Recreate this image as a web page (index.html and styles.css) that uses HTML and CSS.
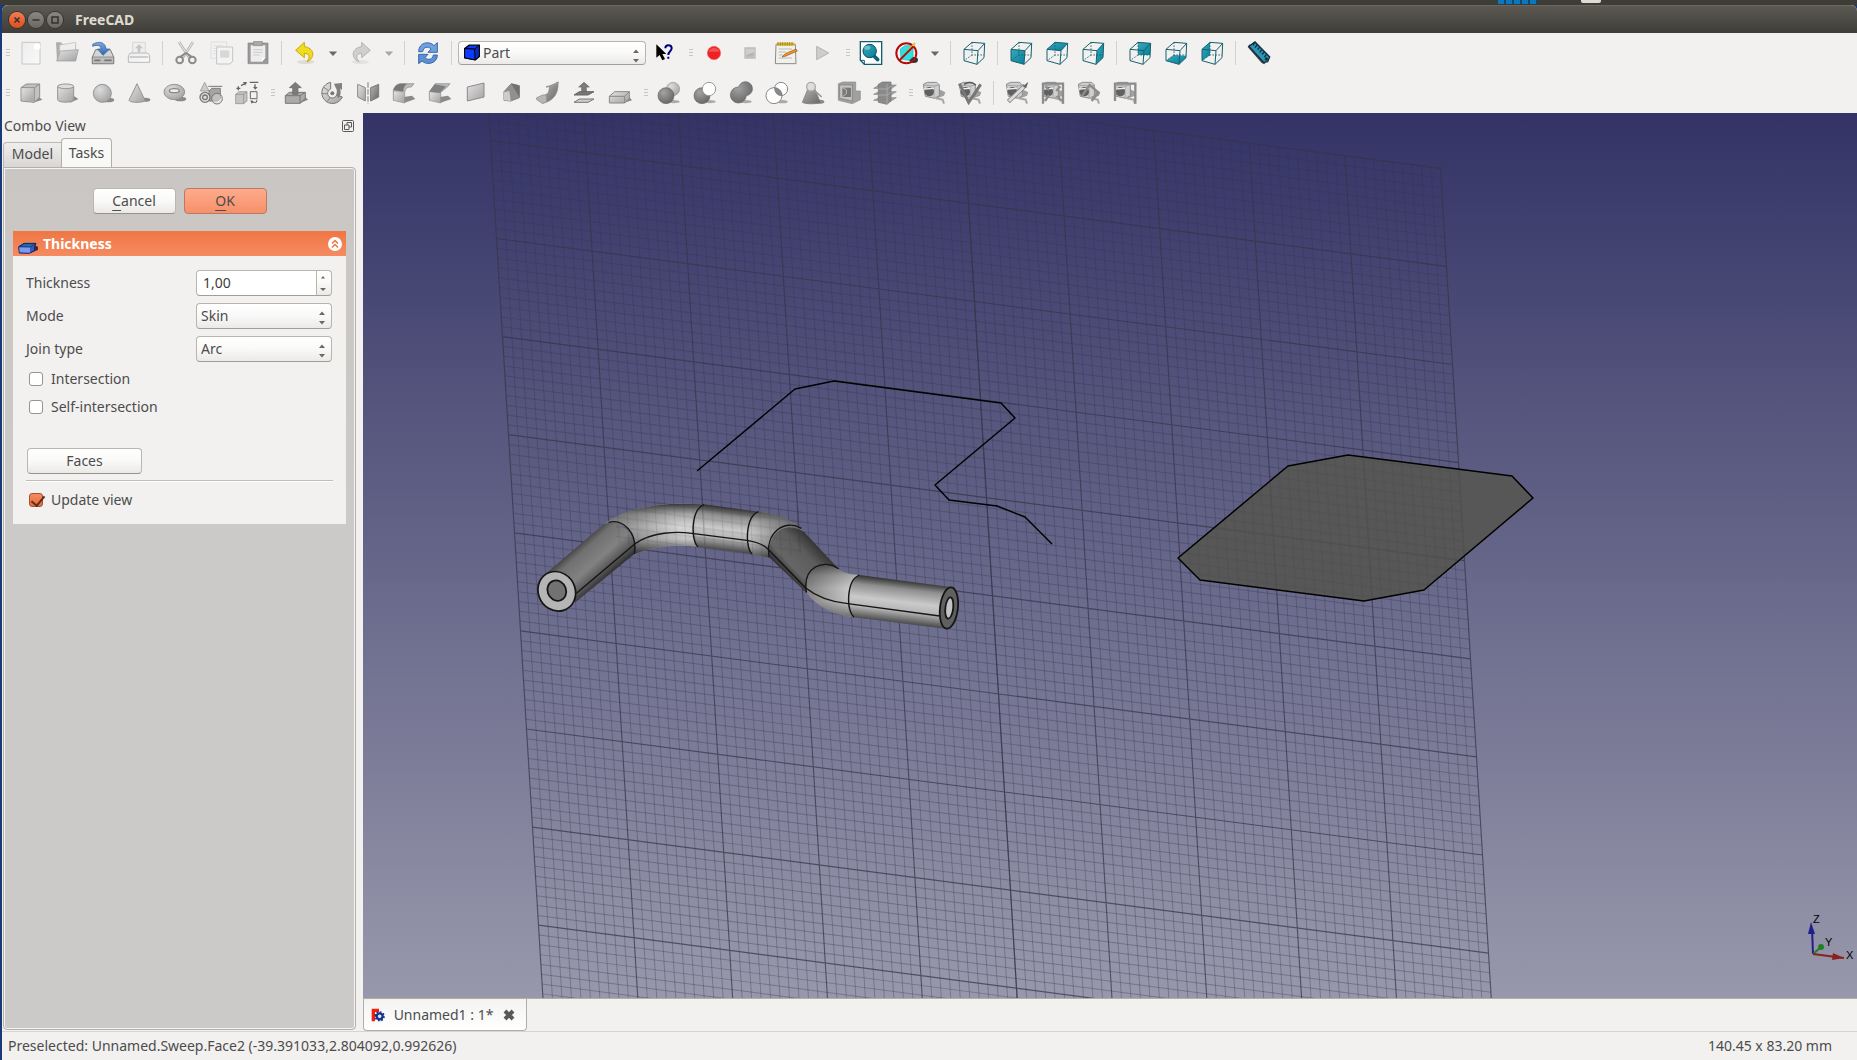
FILE: index.html
```html
<!DOCTYPE html>
<html lang="en">
<head>
<meta charset="utf-8">
<title>FreeCAD</title>
<link rel="stylesheet" href="styles.css">
</head>
<body>
<svg class="defs" aria-hidden="true">
  <defs>
    <linearGradient id="light" x1="0" y1="0" x2="1" y2="1"><stop offset="0" stop-color="#e2e2e2"/><stop offset="1" stop-color="#a2a2a2"/></linearGradient>
    <linearGradient id="dark" x1="0" y1="0" x2="1" y2="1"><stop offset="0" stop-color="#b4b4b4"/><stop offset="1" stop-color="#666"/></linearGradient>
    <linearGradient id="pale" x1="0" y1="0" x2="1" y2="1"><stop offset="0" stop-color="#ececec"/><stop offset="1" stop-color="#fafafa"/></linearGradient>
    <linearGradient id="teal" x1="0" y1="0" x2="1" y2="1"><stop offset="0" stop-color="#3aa9bd"/><stop offset="1" stop-color="#047f96"/></linearGradient>
    <linearGradient id="blue" x1="0" y1="0" x2="0" y2="1"><stop offset="0" stop-color="#7fa8dc"/><stop offset="1" stop-color="#2f67b0"/></linearGradient>
    <radialGradient id="ball" cx=".35" cy=".3" r=".75"><stop offset="0" stop-color="#dcdcdc"/><stop offset="1" stop-color="#a4a4a4"/></radialGradient>
    <radialGradient id="dball" cx=".35" cy=".3" r=".75"><stop offset="0" stop-color="#a2a2a2"/><stop offset="1" stop-color="#666"/></radialGradient>
    <symbol id="cube" viewBox="0 0 72 72"><path d="M6 25L48 29L45 70L6 59ZM6 25L30 4L68 7L48 29M68 7L66 50L45 70" fill="none" stroke="#17606f" stroke-width="3" stroke-linejoin="round"/><path d="M30 4V42H66M30 42L6 59" fill="none" stroke="#17606f" stroke-width="2.5" stroke-dasharray="5 4"/></symbol>
    <symbol id="tape" viewBox="0 0 72 72"><path d="M40 54L66 44L70 34L50 24Z" fill="#a0a0a0"/><path d="M4 10L16 4H44L52 12V44L38 52L10 46Z" fill="#cfcfcf" stroke="#8c8c8c" stroke-width="3"/><path d="M4 12L36 15L52 12M36 15V50" fill="none" stroke="#a4a4a4" stroke-width="3"/><ellipse cx="22" cy="32" rx="14" ry="14" fill="#606060"/><path d="M6 24L36 22" stroke="#eee" stroke-width="4"/><path d="M42 52L62 56L66 68" fill="none" stroke="#a8a8a8" stroke-width="6"/></symbol>
    <symbol id="updown" viewBox="0 0 10 16"><path d="M2 5L5 1.500L8 5ZM2 11L5 14.500L8 11Z" fill="#6b6862"/></symbol>
    <symbol id="drop" viewBox="0 0 12 8"><path d="M1 1.500H11L6 7Z" fill="currentColor"/></symbol>
  </defs>
</svg>
<div class="desktop-bar"><i class="tray-blue"></i><i class="tray-white"></i></div>
<div class="window">
  <header class="titlebar">
    <button class="wm wm-close" aria-label="Close"><svg viewBox="0 0 16 16"><path d="M5.500 5.500L10.500 10.500M10.500 5.500L5.500 10.500"/></svg></button>
    <button class="wm" aria-label="Minimize"><svg viewBox="0 0 16 16"><path d="M4.500 8H11.500"/></svg></button>
    <button class="wm" aria-label="Maximize"><svg viewBox="0 0 16 16"><path d="M5 5H11V11H5Z"/></svg></button>
    <h1>FreeCAD</h1>
  </header>

  <div class="toolbar">
    <i class="grip"></i>
    <button aria-label="New"><svg viewBox="0 0 72 72"><path d="M9 4H63V69H9Z" fill="url(#pale)" stroke="#c6c6c6" stroke-width="3"/><circle cx="54" cy="17" r="10" fill="#fff"/></svg></button>
    <button aria-label="Open"><svg viewBox="0 0 72 72"><path d="M3 4H18L22 9H63V60H6Z" fill="#aeaeae"/><path d="M14 12L62 4V40H14Z" fill="#eee" stroke="#bbb" stroke-width="2"/><path d="M16 30L70 26L62 60H5Z" fill="url(#light)" stroke="#999" stroke-width="2"/></svg></button>
    <button aria-label="Save"><svg viewBox="0 0 72 72"><path d="M14 26H58L68 48V68H4V48Z" fill="#d4d4d4" stroke="#7c7c7c" stroke-width="3"/><path d="M4 48H68V68H4Z" fill="#bcbcbc" stroke="#777" stroke-width="2"/><path d="M10 58H28M40 58H62" stroke="#777" stroke-width="5"/><path d="M5 10C24-2 44 4 45 24H56L36 43L20 24H30C30 14 20 10 5 16Z" fill="url(#blue)" stroke="#2d5c9c" stroke-width="2"/></svg></button>
    <button aria-label="Print"><svg viewBox="0 0 72 72"><path d="M17 4H55V40H17Z" fill="#eee" stroke="#ccc" stroke-width="2"/><path d="M36 10L48 22H40V34H32V22H24Z" fill="#c4c4c4"/><path d="M10 36H62L68 44V64H4V44Z" fill="url(#pale)" stroke="#b8b8b8" stroke-width="3"/><path d="M8 48H64" stroke="#bbb" stroke-width="4"/></svg></button>
    <i class="sep"></i>
    <button aria-label="Cut"><svg viewBox="0 0 72 72"><path d="M15 3L46 50M57 3L26 50" stroke="#b4b4b4" stroke-width="8"/><path d="M15 3L44 47M57 3L28 47" stroke="#ededed" stroke-width="3"/><ellipse cx="17" cy="57" rx="10" ry="10" fill="none" stroke="#8b8b8b" stroke-width="6"/><ellipse cx="55" cy="57" rx="10" ry="10" fill="none" stroke="#8b8b8b" stroke-width="6"/><path d="M20 47L36 36L52 47" fill="none" stroke="#8b8b8b" stroke-width="6"/></svg></button>
    <button aria-label="Copy"><svg viewBox="0 0 72 72"><path d="M3 3H50V52H3Z" fill="#f2f2f2" stroke="#d4d4d4" stroke-width="2"/><path d="M10 14H40M10 22H40M10 30H20M10 38H20" stroke="#ddd" stroke-width="3"/><path d="M20 18H68V60L60 69H20Z" fill="#f4f4f4" stroke="#c4c4c4" stroke-width="3"/><path d="M30 28H58V50H30Z" fill="#d8d8d8"/></svg></button>
    <button aria-label="Paste"><svg viewBox="0 0 72 72"><path d="M6 6H66V68H6Z" fill="#999" stroke="#868686" stroke-width="2"/><path d="M14 13H58V50L48 62H14Z" fill="#ededed"/><path d="M23 1H49V14H23Z" fill="#aaa" stroke="#888" stroke-width="2"/><path d="M22 26H50M22 34H50M22 42H42" stroke="#ccc" stroke-width="3"/><path d="M58 50L48 62V50Z" fill="#fff"/></svg></button>
    <i class="sep"></i>
    <button aria-label="Undo"><svg viewBox="0 0 72 72"><ellipse cx="38" cy="63" rx="26" ry="6" fill="#dedcd8"/><path d="M8 28L34 4V17C62 20 70 48 42 63C54 46 48 38 34 37V50Z" fill="#f2dc20" stroke="#c9a808" stroke-width="3" stroke-linejoin="round"/></svg></button>
    <button class="menu" aria-label="Undo list"><svg viewBox="0 0 12 8"><use href="#drop"/></svg></button>
    <button aria-label="Redo"><svg viewBox="0 0 72 72"><ellipse cx="34" cy="63" rx="26" ry="6" fill="#e4e2e0"/><path d="M64 28L38 4V17C10 20 2 48 30 63C18 46 24 38 38 37V50Z" fill="#cfcfcf" stroke="#b4b4b4" stroke-width="3" stroke-linejoin="round"/></svg></button>
    <button class="menu menu-off" aria-label="Redo list"><svg viewBox="0 0 12 8"><use href="#drop"/></svg></button>
    <i class="sep"></i>
    <button aria-label="Refresh"><svg viewBox="0 0 72 72"><path d="M8 32C8 4 40-2 54 14L64 5V34H36L45 24C36 14 22 18 20 32Z" fill="#6ea1dd" stroke="#3969ae" stroke-width="3"/><path d="M64 42C64 68 32 74 18 60L8 68V40H36L27 50C38 60 50 54 52 42Z" fill="#5c90d2" stroke="#3969ae" stroke-width="3"/></svg></button>
    <i class="sep"></i>
    <div class="combo workbench">
      <svg class="wb-icon" viewBox="0 0 48 48"><path d="M2 12L16 2H46V36L34 46L2 40Z" fill="#0b3bff" stroke="#000" stroke-width="4" stroke-linejoin="round"/><path d="M2 12L32 14L46 2V36L34 46Z" fill="#0a2bb8" stroke="#000" stroke-width="3"/><path d="M2 12L32 14L33 46L2 40Z" fill="#0b3bff" stroke="#000" stroke-width="3"/></svg>
      <select aria-label="Workbench"><option>Part</option></select>
      <svg class="arrows" viewBox="0 0 10 16"><use href="#updown"/></svg>
    </div>
    <button aria-label="What's this?"><svg viewBox="0 0 72 72"><path d="M10 10V50L20 42L28 58L36 54L28 39H40Z" fill="#000"/><path d="M37 22C37 10 56 10 56 22C56 31 46 31 46 42M46 47V53" fill="none" stroke="#000080" stroke-width="6"/></svg></button>
    <i class="grip"></i>
    <button aria-label="Record macro"><svg viewBox="0 0 72 72"><circle cx="36" cy="36" r="20" fill="#ee2222" stroke="#f46a6a" stroke-width="2"/><path d="M20 32A17 17 0 0 1 52 32Z" fill="#f45252"/></svg></button>
    <button aria-label="Stop macro"><svg viewBox="0 0 72 72"><path d="M21 21H51V51H21Z" fill="#cecece" stroke="#bcbcbc" stroke-width="4"/><path d="M25 42L47 34V47H25Z" fill="#b4b4b4"/></svg></button>
    <button aria-label="Macros"><svg viewBox="0 0 72 72"><path d="M6 10H64L66 68H4Z" fill="#f0f0ec" stroke="#8c8c86" stroke-width="3"/><path d="M9 5H61V14H9Z" fill="#d8b520"/><path d="M12 3V14M19 3V14M26 3V14M33 3V14M40 3V14M47 3V14M54 3V14" stroke="#8b7415" stroke-width="2"/><path d="M14 24H54M14 33H36M14 42H28M14 51H54" stroke="#bbb" stroke-width="3"/><path d="M24 48L34 38L66 24L70 30L36 45Z" fill="#f0952a" stroke="#955510" stroke-width="2"/></svg></button>
    <button aria-label="Execute macro"><svg viewBox="0 0 72 72"><path d="M20 16L56 36L20 56Z" fill="#cdcdcd" stroke="#b2b2b2" stroke-width="3"/></svg></button>
    <i class="grip"></i>
    <button aria-label="Fit all"><svg viewBox="0 0 72 72"><path d="M4 2H68V70H16L4 58Z" fill="#fff" stroke="#135e6d" stroke-width="4"/><path d="M4 58H16V70" fill="none" stroke="#135e6d" stroke-width="3"/><path d="M42 42L56 56" stroke="#0b6579" stroke-width="11" stroke-linecap="round"/><circle cx="32" cy="30" r="20" fill="url(#teal)" stroke="#0a4652" stroke-width="3"/><ellipse cx="25" cy="20" rx="9" ry="6" fill="#6cc4d2"/></svg></button>
    <button aria-label="Draw style"><svg viewBox="0 0 72 72"><ellipse cx="56" cy="57" rx="13" ry="9" fill="#333"/><path d="M16 24L30 14H54V48L42 58L18 54Z" fill="#33dede" stroke="#1bb" stroke-width="2"/><circle cx="34" cy="37" r="30" fill="none" stroke="#b40a0a" stroke-width="6"/><path d="M40 30L60 6" stroke="#e9c726" stroke-width="6"/><path d="M13 58L55 16" stroke="#b40a0a" stroke-width="6"/></svg></button>
    <button class="menu" aria-label="Draw style list"><svg viewBox="0 0 12 8"><use href="#drop"/></svg></button>
    <i class="sep"></i>
    <button aria-label="Axonometric"><svg viewBox="0 0 72 72"><use href="#cube"/></svg></button>
    <i class="sep"></i>
    <button aria-label="Front"><svg viewBox="0 0 72 72"><path d="M6 25L48 29L45 70L6 59Z" fill="url(#teal)"/><use href="#cube"/></svg></button>
    <button aria-label="Top"><svg viewBox="0 0 72 72"><path d="M6 25L30 4L68 7L48 29Z" fill="url(#teal)"/><use href="#cube"/></svg></button>
    <button aria-label="Right"><svg viewBox="0 0 72 72"><path d="M48 29L68 7L66 50L45 70Z" fill="url(#teal)"/><use href="#cube"/></svg></button>
    <i class="sep"></i>
    <button aria-label="Rear"><svg viewBox="0 0 72 72"><path d="M30 4L68 7L66 42H30Z" fill="url(#teal)"/><use href="#cube"/></svg></button>
    <button aria-label="Bottom"><svg viewBox="0 0 72 72"><path d="M6 59L30 42L66 44V50L45 70Z" fill="url(#teal)"/><use href="#cube"/></svg></button>
    <button aria-label="Left"><svg viewBox="0 0 72 72"><path d="M6 25L30 4V42L6 59Z" fill="url(#teal)"/><use href="#cube"/></svg></button>
    <i class="sep"></i>
    <button aria-label="Measure distance"><svg viewBox="0 0 72 72"><path d="M2 18L8 10L60 58L52 70L44 66Z" fill="#444"/><path d="M6 16L24 3L68 48L62 62L50 64Z" fill="#2f93b4" stroke="#0e2f3c" stroke-width="4"/><path d="M22 5L18 13M30 12L24 20M37 19L32 26M44 26L38 34M51 34L45 40M58 41L52 48" stroke="#0e2f3c" stroke-width="4"/><circle cx="58" cy="54" r="5" fill="#0c3947"/></svg></button>
  </div>

  <div class="toolbar">
    <i class="grip"></i>
    <button aria-label="Box"><svg viewBox="0 0 72 72"><path d="M40 66L70 56L60 48Z" fill="#8a8a8a"/><path d="M6 20L22 9H62V48L46 64L6 60Z" fill="#c2c2c2" stroke="#8e8e8e" stroke-width="3"/><path d="M6 20H46V62M46 20L62 9" fill="none" stroke="#8e8e8e" stroke-width="3"/><path d="M8 22H44V61L8 58Z" fill="url(#light)"/></svg></button>
    <button aria-label="Cylinder"><svg viewBox="0 0 72 72"><path d="M44 66L70 54L58 46Z" fill="#8a8a8a"/><path d="M8 16V56C8 66 56 66 56 56V16Z" fill="url(#light)" stroke="#959595" stroke-width="3"/><ellipse cx="32" cy="16" rx="24" ry="7" fill="#ddd" stroke="#959595" stroke-width="3"/></svg></button>
    <button aria-label="Sphere"><svg viewBox="0 0 72 72"><ellipse cx="50" cy="57" rx="20" ry="7" fill="#8a8a8a"/><circle cx="34" cy="37" r="27" fill="url(#ball)" stroke="#969696" stroke-width="3"/></svg></button>
    <button aria-label="Cone"><svg viewBox="0 0 72 72"><ellipse cx="54" cy="56" rx="16" ry="6" fill="#8a8a8a"/><path d="M30 8L6 58C8 66 52 66 54 58Z" fill="url(#light)" stroke="#959595" stroke-width="3"/></svg></button>
    <button aria-label="Torus"><svg viewBox="0 0 72 72"><ellipse cx="52" cy="54" rx="18" ry="7" fill="#8a8a8a"/><ellipse cx="34" cy="33" rx="31" ry="23" fill="url(#ball)" stroke="#959595" stroke-width="3"/><ellipse cx="34" cy="29" rx="15" ry="6" fill="#eee" stroke="#888" stroke-width="4"/></svg></button>
    <button aria-label="Primitives"><svg viewBox="0 0 72 72"><path d="M17 4L4 30H30Z" fill="#ccc" stroke="#888" stroke-width="2"/><path d="M28 16H70" stroke="#777" stroke-width="3"/><path d="M30 30L38 22H64V52L56 60H30Z" fill="#a4a4a4" stroke="#808080" stroke-width="3"/><circle cx="18" cy="49" r="15" fill="#ddd" stroke="#777" stroke-width="4"/><circle cx="18" cy="49" r="7" fill="none" stroke="#777" stroke-width="4"/><circle cx="54" cy="53" r="16" fill="#ddd" fill-opacity=".5" stroke="#777" stroke-width="3"/></svg></button>
    <button aria-label="Shape builder"><svg viewBox="0 0 72 72"><path d="M2 40L12 32H36V60L26 68H2Z" fill="#c4c4c4" stroke="#888" stroke-width="2"/><path d="M2 40H26V68M26 40L36 32" fill="none" stroke="#888" stroke-width="2"/><path d="M4 22H16M10 16V28M18 14L34 6M44 4H70M60 10V20" stroke="#666" stroke-width="4"/><path d="M54 18H68L61 26ZM24 3L36 3L30 14ZM46 58L56 60L50 68Z" fill="#666"/><path d="M46 32H66V53H46Z" fill="none" stroke="#666" stroke-width="3"/><path d="M50 64H64L66 56" fill="none" stroke="#666" stroke-width="3"/></svg></button>
    <i class="grip"></i>
    <button aria-label="Extrude"><svg viewBox="0 0 72 72"><path d="M44 68L72 56L62 46Z" fill="#888"/><path d="M4 44L16 34H64V52L48 67H4Z" fill="#aaa" stroke="#777" stroke-width="3"/><path d="M4 44H48V67M48 44L64 34" fill="none" stroke="#777" stroke-width="3"/><path d="M34 4L52 20H42V40H26V20H16Z" fill="#7c7c7c" stroke="#666" stroke-width="2"/></svg></button>
    <button aria-label="Revolve"><svg viewBox="0 0 72 72"><path d="M32 4V24A14 14 0 1 0 50 42L67 48A32 32 0 1 1 32 4Z" fill="url(#light)" stroke="#777" stroke-width="3"/><path d="M4 38H22M22 62L30 50M10 18L24 28" stroke="#888" stroke-width="3"/><path d="M42 8L66 6V28L60 22C64 34 62 44 56 52L48 42C52 34 52 26 46 18Z" fill="#808080"/><circle cx="37" cy="37" r="6" fill="#777"/></svg></button>
    <button aria-label="Mirror"><svg viewBox="0 0 72 72"><path d="M5 10L28 20V60L5 48Z" fill="url(#light)" stroke="#8a8a8a" stroke-width="3"/><path d="M68 10L44 20V60L68 48Z" fill="url(#dark)" stroke="#777" stroke-width="3"/><path d="M36 4V68" stroke="#999" stroke-width="4" stroke-dasharray="16 5"/></svg></button>
    <button aria-label="Fillet"><svg viewBox="0 0 72 72"><path d="M36 66L70 54L60 44L36 48Z" fill="#8a8a8a"/><path d="M4 28C8 14 16 8 28 8H66L58 18C46 18 40 22 38 34V66L4 58Z" fill="#bbb" stroke="#888" stroke-width="2"/><path d="M4 28C8 14 16 8 28 8H46C38 12 34 20 34 32Z" fill="#777"/><path d="M6 32L36 36V64L6 57Z" fill="url(#light)"/></svg></button>
    <button aria-label="Chamfer"><svg viewBox="0 0 72 72"><path d="M36 66L70 54L60 44L36 48Z" fill="#8a8a8a"/><path d="M4 32L22 8H66L58 18L38 34V66L4 58Z" fill="#bbb" stroke="#888" stroke-width="2"/><path d="M4 32L20 10L54 16L36 36Z" fill="#808080"/><path d="M6 34L36 38V64L6 57Z" fill="url(#light)"/></svg></button>
    <button aria-label="Make face"><svg viewBox="0 0 72 72"><path d="M10 18L60 6V48L10 60Z" fill="url(#light)" stroke="#8a8a8a" stroke-width="3"/></svg></button>
    <button aria-label="Ruled surface"><svg viewBox="0 0 72 72"><path d="M12 32L34 8L58 14V50L32 60L12 58Z" fill="#909090" stroke="#808080" stroke-width="3"/><path d="M34 8L58 14V48Z" fill="#707070"/><path d="M12 34L28 30L32 60L12 58Z" fill="#ccc"/></svg></button>
    <button aria-label="Loft"><svg viewBox="0 0 72 72"><path d="M66 3V16C64 46 44 64 18 66L20 44C36 42 40 32 40 16Z" fill="url(#dark)" stroke="#888" stroke-width="2"/><path d="M2 50L20 42H32V62L20 68L2 56Z" fill="#b6b6b6" stroke="#888" stroke-width="2"/><path d="M30 18L60 10L68 3" fill="none" stroke="#999" stroke-width="4"/></svg></button>
    <button aria-label="Sweep"><svg viewBox="0 0 72 72"><path d="M36 4L52 18H43V32H29V18H20Z" fill="#7c7c7c" stroke="#666" stroke-width="2"/><path d="M6 42L22 32H66L48 42Z" fill="#777" stroke="#666" stroke-width="3"/><path d="M6 64L22 54H66L48 64Z" fill="#ccc" stroke="#777" stroke-width="3"/></svg></button>
    <button aria-label="Offset"><svg viewBox="0 0 72 72"><path d="M46 66L72 58L62 46Z" fill="#888"/><path d="M4 46L20 32H64V52L50 66H4Z" fill="url(#light)" stroke="#888" stroke-width="3"/><path d="M4 46H50L64 32M50 46V66" fill="none" stroke="#888" stroke-width="3"/></svg></button>
    <i class="grip"></i>
    <button aria-label="Boolean"><svg viewBox="0 0 72 72"><ellipse cx="50" cy="62" rx="18" ry="5" fill="#aaa"/><circle cx="48" cy="24" r="20" fill="url(#ball)" stroke="#999" stroke-width="2"/><circle cx="27" cy="44" r="24" fill="url(#dball)" stroke="#666" stroke-width="2"/></svg></button>
    <button aria-label="Cut shapes"><svg viewBox="0 0 72 72"><ellipse cx="50" cy="62" rx="18" ry="5" fill="#aaa"/><circle cx="27" cy="44" r="24" fill="url(#dball)" stroke="#666" stroke-width="2"/><circle cx="48" cy="24" r="20" fill="#fff" stroke="#999" stroke-width="3"/></svg></button>
    <button aria-label="Union"><svg viewBox="0 0 72 72"><ellipse cx="50" cy="62" rx="18" ry="5" fill="#aaa"/><path d="M29 18A21 21 0 1 1 52 44A24 24 0 1 1 29 18Z" fill="url(#dball)" stroke="#666" stroke-width="2"/></svg></button>
    <button aria-label="Intersection of shapes"><svg viewBox="0 0 72 72"><ellipse cx="52" cy="62" rx="16" ry="5" fill="#aaa"/><circle cx="48" cy="24" r="20" fill="#fff" stroke="#888" stroke-width="3"/><circle cx="27" cy="44" r="24" fill="#fff" stroke="#888" stroke-width="3"/><path d="M29 20A24 24 0 0 1 51 44A21 21 0 0 1 29 20Z" fill="#8a8a8a" stroke="#777" stroke-width="2"/></svg></button>
    <button aria-label="Check geometry"><svg viewBox="0 0 72 72"><ellipse cx="56" cy="62" rx="14" ry="6" fill="#8a8a8a"/><path d="M22 20H40L58 64C48 70 12 70 4 64Z" fill="url(#dark)" stroke="#777" stroke-width="2"/><circle cx="30" cy="17" r="13" fill="#ddd" stroke="#aaa" stroke-width="4"/><path d="M40 28L62 48" stroke="#999" stroke-width="5"/></svg></button>
    <button aria-label="Section"><svg viewBox="0 0 72 72"><path d="M4 8L18 3H56V30H70V56L46 68L4 58Z" fill="#a0a0a0" stroke="#8b8b8b" stroke-width="2"/><path d="M8 12H46V60L8 52Z" fill="#c4c4c4" stroke="#777" stroke-width="2"/><path d="M16 20H42V48H16Z" fill="#777"/><path d="M16 20L28 26V38L16 48" fill="none" stroke="#bbb" stroke-width="3"/></svg></button>
    <button aria-label="Cross-sections"><svg viewBox="0 0 72 72"><path d="M2 22L18 12H70L54 24ZM2 40L18 32H70L54 42ZM2 58L18 50H70L54 60Z" fill="#a4a4a4" stroke="#858585" stroke-width="2"/><path d="M16 10L28 3H54V60L42 70L16 64Z" fill="#8a8a8a" stroke="#707070" stroke-width="2"/><path d="M16 24H42L54 16M16 42H42L54 34M42 10V68" fill="none" stroke="#aaa" stroke-width="3"/></svg></button>
    <i class="grip"></i>
    <button aria-label="Measure linear"><svg viewBox="0 0 72 72"><use href="#tape"/></svg></button>
    <button aria-label="Measure angular"><svg viewBox="0 0 72 72"><use href="#tape"/><path d="M4 8L32 64L68 10" fill="none" stroke="#777" stroke-width="9"/><path d="M18 10C30 2 44 4 54 12" fill="none" stroke="#555" stroke-width="4"/></svg></button>
    <i class="sep"></i>
    <button aria-label="Refresh measurements"><svg viewBox="0 0 72 72"><use href="#tape"/><path d="M10 62L60 14" stroke="#888" stroke-width="13"/><path d="M12 60L56 18" stroke="#ddd" stroke-width="8"/><path d="M54 16L70 2L64 20Z" fill="#666"/></svg></button>
    <button aria-label="Toggle all measurements"><svg viewBox="0 0 72 72"><use href="#tape"/><path d="M6 68V8H66V68M14 16L24 28M58 16L46 30M12 60L24 42M60 60L50 44" fill="none" stroke="#8c8c8c" stroke-width="7"/></svg></button>
    <button aria-label="Toggle 3D measurements"><svg viewBox="0 0 72 72"><use href="#tape"/><path d="M14 46L38 12L64 34L44 60" fill="none" stroke="#8c8c8c" stroke-width="7"/></svg></button>
    <button aria-label="Toggle delta measurements"><svg viewBox="0 0 72 72"><use href="#tape"/><path d="M6 60V8H67V68" fill="none" stroke="#8c8c8c" stroke-width="7"/></svg></button>
  </div>

  <div class="workspace">
    <aside class="dock">
      <div class="dock-title"><h2>Combo View</h2><button aria-label="Float"><svg viewBox="0 0 12 12"><path d="M.500 1.500Q.500.500 1.500.500H10.500Q11.500.500 11.500 1.500V10.500Q11.500 11.500 10.500 11.500H1.500Q.500 11.500.500 10.500ZM5 5V2.500H9.500V7H7M2.500 5H7V9.500H2.500Z"/></svg></button></div>
      <nav class="tabs"><button class="tab">Model</button><button class="tab tab-on">Tasks</button></nav>
      <form class="tasks">
        <div class="actions"><button type="button" class="btn"><u>C</u>ancel</button><button type="button" class="btn btn-ok"><u>O</u>K</button></div>
        <section class="card">
          <header class="card-head">
            <svg class="head-icon" viewBox="0 0 60 36"><path d="M34 34L60 24V14L46 8Z" fill="#4a2a30"/><path d="M2 14L18 4H54L50 14V26L34 34L4 33Z" fill="#3a58c0" stroke="#12235c" stroke-width="3"/><path d="M4 16H36V32L5 31Z" fill="#7c9af0"/><path d="M4 14L18 5H53L38 15Z" fill="#1e6fb0" stroke="#12235c" stroke-width="2"/></svg>
            <h3>Thickness</h3>
            <button type="button" aria-label="Collapse"><svg viewBox="0 0 14 14"><circle cx="7" cy="7" r="7" fill="#fff"/><path d="M4 6.500L7 3.500L10 6.500M4 10.500L7 7.500L10 10.500" fill="none" stroke="#ee7444" stroke-width="1.500"/></svg></button>
          </header>
          <div class="card-body">
            <div class="field"><label for="thick">Thickness</label><div class="combo spin"><input id="thick" type="text" value="1,00"><svg class="arrows" viewBox="0 0 10 16"><path d="M3 3.500L5 1L7 3.500ZM2 13L5 16L8 13Z" fill="#6b6862"/></svg></div></div>
            <div class="field"><label for="mode">Mode</label><div class="combo"><select id="mode"><option>Skin</option></select><svg class="arrows" viewBox="0 0 10 16"><use href="#updown"/></svg></div></div>
            <div class="field"><label for="join">Join type</label><div class="combo"><select id="join"><option>Arc</option></select><svg class="arrows" viewBox="0 0 10 16"><use href="#updown"/></svg></div></div>
            <label class="check"><input type="checkbox">Intersection</label>
            <label class="check"><input type="checkbox">Self-intersection</label>
            <button type="button" class="btn faces">Faces</button>
            <hr>
            <label class="check"><input type="checkbox" checked>Update view</label>
          </div>
        </section>
      </form>
    </aside>

    <main class="document">
      <div class="view">
        <svg viewBox="363 113 1494 885" preserveAspectRatio="xMidYMid slice" role="img" aria-label="3D view">
          <defs>
            <linearGradient id="sky" x1="0" y1="0" x2="0" y2="1"><stop offset="0" stop-color="#333366"/><stop offset="1" stop-color="#9898ac"/></linearGradient>
            <path id="rows" d="M0 10H1000M0 20H1000M0 30H1000M0 40H1000M0 50H1000M0 60H1000M0 70H1000M0 80H1000M0 90H1000"/>
            <path id="cols" d="M10 0V1000M20 0V1000M30 0V1000M40 0V1000M50 0V1000M60 0V1000M70 0V1000M80 0V1000M90 0V1000"/>
            <g id="grid" transform="matrix(.956 .126 .06 .981 484.500 42.300)" fill="none" stroke="#343448">
              <g stroke-width="1" stroke-opacity=".34">
                <use href="#rows"/><use href="#rows" y="100"/><use href="#rows" y="200"/><use href="#rows" y="300"/><use href="#rows" y="400"/><use href="#rows" y="500"/><use href="#rows" y="600"/><use href="#rows" y="700"/><use href="#rows" y="800"/><use href="#rows" y="900"/>
                <use href="#cols"/><use href="#cols" x="100"/><use href="#cols" x="200"/><use href="#cols" x="300"/><use href="#cols" x="400"/><use href="#cols" x="500"/><use href="#cols" x="600"/><use href="#cols" x="700"/><use href="#cols" x="800"/><use href="#cols" x="900"/>
              </g>
              <path stroke-width="1.200" stroke-opacity=".72" d="M0 0H1000M0 100H1000M0 200H1000M0 300H1000M0 400H1000M0 500H1000M0 600H1000M0 700H1000M0 800H1000M0 900H1000M0 0V1000M100 0V1000M200 0V1000M300 0V1000M400 0V1000M500 0V1000M600 0V1000M700 0V1000M800 0V1000M900 0V1000M1000 0V1000"/>
              <path stroke-width="1.200" stroke-opacity=".5" d="M500 0V1000"/>
            </g>
            <linearGradient id="segA" gradientUnits="userSpaceOnUse" x1="145" y1="565" x2="240" y2="665"><stop offset="0" stop-color="#3c3c3c"/><stop offset=".2" stop-color="#707070"/><stop offset=".55" stop-color="#828282"/><stop offset=".8" stop-color="#565656"/><stop offset="1" stop-color="#222"/></linearGradient>
            <linearGradient id="segB" gradientUnits="userSpaceOnUse" x1="250" y1="560" x2="440" y2="490"><stop offset="0" stop-color="#767676"/><stop offset="1" stop-color="#d6d6d6"/></linearGradient>
            <linearGradient id="segD" gradientUnits="userSpaceOnUse" x1="650" y1="500" x2="760" y2="540"><stop offset="0" stop-color="#c6c6c6"/><stop offset="1" stop-color="#747474"/></linearGradient>
            <linearGradient id="segE" gradientUnits="userSpaceOnUse" x1="745" y1="650" x2="845" y2="560"><stop offset="0" stop-color="#262626"/><stop offset=".25" stop-color="#666"/><stop offset=".65" stop-color="#5c5c5c"/><stop offset="1" stop-color="#2d2d2d"/></linearGradient>
            <linearGradient id="segF" gradientUnits="userSpaceOnUse" x1="790" y1="650" x2="930" y2="690"><stop offset="0" stop-color="#777"/><stop offset="1" stop-color="#cecece"/></linearGradient>
            <linearGradient id="edge" x1="0" y1="0" x2="0" y2="1"><stop offset="0" stop-color="#111" stop-opacity=".8"/><stop offset=".22" stop-color="#222" stop-opacity=".25"/><stop offset=".45" stop-color="#222" stop-opacity="0"/><stop offset=".7" stop-color="#222" stop-opacity=".1"/><stop offset="1" stop-color="#111" stop-opacity=".75"/></linearGradient>
            <linearGradient id="segG" gradientUnits="userSpaceOnUse" x1="1080" y1="662" x2="1064" y2="790"><stop offset="0" stop-color="#333"/><stop offset=".2" stop-color="#8f8f8f"/><stop offset=".5" stop-color="#cacaca"/><stop offset=".72" stop-color="#b4b4b4"/><stop offset="1" stop-color="#484848"/></linearGradient>
            <linearGradient id="segC" gradientUnits="userSpaceOnUse" x1="592" y1="444" x2="576" y2="572"><stop offset="0" stop-color="#333"/><stop offset=".2" stop-color="#8f8f8f"/><stop offset=".5" stop-color="#cacaca"/><stop offset=".72" stop-color="#b4b4b4"/><stop offset="1" stop-color="#484848"/></linearGradient>
            <clipPath id="over"><path d="M616 505L640 502L802 507V552L780 560L722 545L616 545Z"/></clipPath>
            <clipPath id="plate"><path d="M1178 558L1288 466L1348 455L1512 476L1533 498L1424 590L1364 601L1200 580Z"/></clipPath>
          </defs>
          <rect x="-1000" y="113" width="4000" height="885" fill="url(#sky)"/>
          <use href="#grid"/>
          <g stroke="#000" stroke-width="1.500" stroke-linejoin="round">
            <path d="M697 471L795 389L834 381L1001 403L1015 418L935 485L949 500L997 506L1025 517L1052 544" fill="none"/>
            <path d="M1178 558L1288 466L1348 455L1512 476L1533 498L1424 590L1364 601L1200 580Z" fill="#575757"/>
          </g>
          <g clip-path="url(#plate)" opacity=".35"><use href="#grid"/></g>
          <g transform="translate(520 360) scale(.357143 .333333)">
            <path d="M75 638L235 492C280 475 330 520 320 582L155 727Z" fill="url(#segA)"/>
            <path d="M235 492C300 440 400 425 515 433C478 450 478 540 498 560C430 552 370 560 318 583C330 520 290 475 235 492Z" fill="url(#segB)"/>
            <path d="M235 492C300 440 400 425 515 433C478 450 478 540 498 560C430 552 370 560 318 583C330 520 290 475 235 492Z" fill="url(#edge)"/>
            <path d="M515 433L668 455C630 470 630 565 650 582L498 560C478 540 478 450 515 433Z" fill="url(#segC)"/>
            <path d="M668 455C720 460 770 480 795 515C740 480 690 520 700 594L650 582C630 565 630 470 668 455Z" fill="url(#segD)"/>
            <path d="M668 455C720 460 770 480 795 515C740 480 690 520 700 594L650 582C630 565 630 470 668 455Z" fill="url(#edge)" opacity=".8"/>
            <path d="M795 515L895 630C850 590 795 620 802 698L700 594C690 520 740 480 795 515Z" fill="url(#segE)"/>
            <path d="M895 630C910 640 925 643 950 645C915 660 912 745 935 772C880 765 830 740 802 698C790 620 850 590 895 630Z" fill="url(#segF)"/>
            <path d="M895 630C910 640 925 643 950 645C915 660 912 745 935 772C880 765 830 740 802 698C790 620 850 590 895 630Z" fill="url(#edge)" opacity=".7"/>
            <path d="M950 645L1210 682L1195 806L935 772C912 745 915 660 950 645Z" fill="url(#segG)"/>
            <g fill="none" stroke="#151515" stroke-width="4">
              <path d="M248 487C290 475 330 520 320 582M515 433C478 450 478 540 498 560M668 455C630 470 630 565 650 582M788 505C740 475 685 520 698 592M892 626C850 595 790 620 802 698M950 645C915 660 912 745 935 772"/>
              <path d="M158 700L322 551C370 515 440 514 481 520L635 541C660 545 680 552 694 567L800 684C840 718 880 727 918 731L1175 768"/>
            </g>
            <ellipse cx="103" cy="694" rx="52" ry="60" transform="rotate(-18 103 694)" fill="#b5b5b5" stroke="#151515" stroke-width="5"/>
            <ellipse cx="103" cy="692" rx="26" ry="31" transform="rotate(-18 103 692)" fill="#727272" stroke="#151515" stroke-width="5"/>
            <ellipse cx="1201" cy="744" rx="25" ry="62" transform="rotate(6 1201 744)" fill="#606060" stroke="#151515" stroke-width="5"/>
            <ellipse cx="1202" cy="744" rx="11" ry="32" transform="rotate(6 1202 744)" fill="#c4c4c4" stroke="#151515" stroke-width="5"/>
          </g>
          <g clip-path="url(#over)" opacity=".45"><use href="#grid"/></g>
        </svg>
        <svg class="axes" viewBox="0 0 50 50" role="img" aria-label="Axes">
          <path d="M8 40L7 14" stroke="#20208c" stroke-width="2"/><path d="M3 20L6 8L10 20Z" fill="#20208c"/>
          <path d="M8 40L16 33" stroke="#208020" stroke-width="2"/><circle cx="16" cy="33" r="3" fill="#208020"/>
          <path d="M8 40L39 44" stroke="#8c2020" stroke-width="2"/><path d="M28 39L39 44L27 46Z" fill="#8c2020"/>
          <text x="8" y="9">Z</text><text x="20" y="32">Y</text><text x="41" y="45">X</text>
        </svg>
      </div>
      <div class="doc-tabs">
        <div class="doc-tab">
          <svg class="doc-icon" viewBox="0 0 42 42"><path d="M2 2H24V12H12V18H20V26H12V40H2Z" fill="#f0200e"/><circle cx="26" cy="25" r="9" fill="#dfe6f6" stroke="#16348c" stroke-width="7"/><circle cx="26" cy="25" r="13" fill="none" stroke="#16348c" stroke-width="5" stroke-dasharray="5 5"/></svg>
          <span>Unnamed1 : 1*</span>
          <button aria-label="Close document"><svg viewBox="0 0 14 14"><path d="M3 3L11 11M11 3L3 11" stroke="#5a5854" stroke-width="4"/></svg></button>
        </div>
      </div>
    </main>
  </div>
  <footer class="status"><span>Preselected: Unnamed.Sweep.Face2 (-39.391033,2.804092,0.992626)</span><span>140.45 x 83.20 mm</span></footer>
</div>
</body>
</html>
```
FILE: styles.css
```css
* { box-sizing: border-box; }
body {
  margin: 0;
  height: 100vh;
  display: flex;
  flex-direction: column;
  overflow: hidden;
  background: #173a78;
  color: #4c4c4c;
  font: 14px/20px "Noto Sans", "Open Sans", sans-serif;
}
h1, h2, h3 { margin: 0; font-size: inherit; font-weight: inherit; }
button, input, select { font: inherit; color: inherit; margin: 0; }
button { padding: 0; border: 0; background: none; }
svg { display: block; }
.defs { position: absolute; width: 0; height: 0; }
.desktop-bar {
  height: 5px;
  flex: none;
  display: flex;
  justify-content: flex-end;
  gap: 43px;
  padding-right: 256px;
  background: #3d3c37;
}
.tray-blue { width: 40px; height: 4px; background: repeating-linear-gradient(90deg, #0a78be 0 6px, #1c4460 6px 8px); }
.tray-white { width: 20px; height: 3px; border-radius: 0 0 2px 2px; background: #dfdbd2; }
.window {
  flex: 1;
  min-height: 0;
  margin-left: 2px;
  display: flex;
  flex-direction: column;
  background: #f2f1f0;
  border-radius: 6px 6px 0 0;
}
.titlebar {
  height: 28px;
  flex: none;
  display: flex;
  align-items: center;
  gap: 3px;
  padding-left: 7px;
  background: linear-gradient(#5c5952, #3e3d39);
  border-top: 1px solid #6a675c;
  border-radius: 6px 6px 0 0;
}
.titlebar h1 { margin-left: 9px; color: #dfdbd2; font-weight: 700; }
.wm {
  width: 16px;
  height: 16px;
  border-radius: 50%;
  background: linear-gradient(#8a877f, #6a6862);
  box-shadow: 0 0 0 1px #35342f;
}
.wm-close { background: linear-gradient(#f47c54, #df4c1c); }
.wm svg { fill: none; stroke: #33322e; stroke-width: 1.5; }

.toolbar { height: 40px; flex: none; display: flex; align-items: center; margin-left: -2px; }
.toolbar button { width: 36px; height: 36px; flex: none; display: grid; place-items: center; }
.toolbar button svg { width: 24px; height: 24px; }
.toolbar .menu { width: 20px; color: #6b6862; }
.toolbar .menu svg { width: 10px; height: 7px; }
.toolbar .menu-off { color: #aaa8a4; }
.grip {
  width: 13px;
  height: 8px;
  flex: none;
  background: repeating-linear-gradient(#c8c6c3 0 1px, transparent 1px 3px) 6px 0 / 4px 7px no-repeat;
}
.sep { width: 1px; height: 24px; margin: 0 5px; flex: none; background: #d3d1ce; }

.combo {
  position: relative;
  width: 136px;
  height: 26px;
  border: 1px solid #b8b4ae;
  border-bottom-color: #a19d97;
  border-radius: 4px;
  background: linear-gradient(#fff, #f9f9f8 50%, #ebeae8);
}
.combo select, .combo input {
  appearance: none;
  width: 100%;
  height: 24px;
  padding: 0 4px;
  border: 0;
  border-radius: 4px;
  background: none;
  color: #4c4c4c;
}
.arrows { position: absolute; right: 4px; top: 6px; width: 10px; height: 16px; pointer-events: none; }
.combo.spin input { width: 120px; padding: 0 6px 2px; border-radius: 4px 0 0 4px; border-right: 1px solid #b8b4ae; background: #fff; color: #3c3c3c; }
.spin .arrows { right: 3px; top: 4px; }
.workbench { width: 188px; height: 24px; margin: 0 1px; }
.workbench select { height: 22px; padding-left: 24px; }
.wb-icon { position: absolute; left: 5px; top: 2px; width: 16px; height: 17px; }

.workspace { flex: 1; min-height: 0; display: flex; }
.dock { width: 361px; flex: none; display: flex; flex-direction: column; padding: 0 7px 0 1px; }
.dock-title { display: flex; justify-content: space-between; align-items: center; height: 25px; padding: 0 2px 0 1px; }
.dock-title svg { width: 12px; height: 12px; fill: none; stroke: #5c5954; }
.tabs { display: flex; align-items: flex-end; height: 30px; margin-bottom: -1px; }
.tab {
  height: 26px;
  width: 58px;
  padding-bottom: 2px;
  border: 1px solid #bcb8b2;
  border-right: 0;
  border-radius: 4px 0 0 0;
  background: linear-gradient(#efeeed, #d9d7d5);
}
.tab-on { height: 30px; width: 51px; border: 1px solid #b2aea8; border-bottom: 0; border-radius: 4px 4px 0 0; background: #f8f8f7; }
.tasks {
  flex: 1;
  margin-bottom: 1px;
  padding: 18px 9px;
  border: 1px solid #b4b0aa;
  border-radius: 0 4px 4px 4px;
  box-shadow: inset 0 0 0 1px #f4f3f2;
  background: linear-gradient(#cac6c3, #cbcac8 40%);
}
.actions { display: flex; justify-content: center; gap: 8px; padding: 2px 0 17px; }
.btn {
  width: 83px;
  height: 26px;
  border: 1px solid #bab6b0;
  border-bottom-color: #96928c;
  border-radius: 4px;
  background: linear-gradient(#fff, #f9f9f8 50%, #eae9e7);
}
.btn u { text-underline-offset: 4px; }
.btn-ok { border-color: #b87a62; background: linear-gradient(#ffab8c, #f6906a); }
.card { background: #f2f1f0; }
.card-head {
  height: 25px;
  display: flex;
  align-items: center;
  gap: 5px;
  padding: 0 4px 0 5px;
  background: linear-gradient(#f07644, #f58b61);
  color: #fff;
  font-weight: 700;
}
.card-head h3 { flex: 1; }
.card-head button svg { width: 14px; height: 14px; }
.head-icon { width: 20px; height: 12px; align-self: flex-end; margin-bottom: 2px; }
.card-body { padding: 14px 13px 6px; display: flex; flex-direction: column; }
.field { display: flex; align-items: center; justify-content: space-between; height: 26px; margin: 0 1px 7px 0; }
.field label { flex: 1; }
.check { display: flex; align-items: center; gap: 8px; height: 20px; margin-bottom: 8px; padding-left: 3px; }
.check input {
  appearance: none;
  position: relative;
  width: 14px;
  height: 14px;
  margin: 0;
  border: 1px solid #97938d;
  border-radius: 3px;
  background: #fff;
}
.check input:checked { border-color: #a8512e; background: linear-gradient(#f58a62, #ea6c3c); }
.check input:checked::after {
  content: "";
  position: absolute;
  left: 4px;
  top: -1px;
  width: 6px;
  height: 11px;
  border: solid #5c2f1c;
  border-width: 0 2px 2px 0;
  transform: rotate(40deg);
}
.faces { width: 115px; margin: 23px 0 6px 1px; }
hr { width: 100%; height: 2px; margin: 0 0 8px; border: 0; border-top: 1px solid #c0bdb9; border-bottom: 1px solid #fff; }

.document { flex: 1; min-width: 0; display: flex; flex-direction: column; }
.view { position: relative; flex: 1; min-height: 0; overflow: hidden; background: #66668a; }
.view > svg:first-child { width: 100%; height: 100%; }
.view .axes { position: absolute; right: 2px; bottom: 34px; width: 50px; height: 50px; overflow: visible; font: 11px "Liberation Sans", sans-serif; }
.doc-tabs { height: 33px; flex: none; border-top: 1px solid #b2aea8; display: flex; align-items: flex-start; }
.doc-tab {
  width: 164px;
  height: 32px;
  display: flex;
  align-items: center;
  justify-content: space-between;
  padding: 0 10px 0 7px;
  border: 1px solid #b2aea8;
  border-top: 0;
  border-radius: 0 0 4px 4px;
  background: linear-gradient(#f4f3f2, #fff);
  white-space: nowrap;
}
.doc-icon, .doc-tab button svg { width: 14px; height: 14px; }
.status {
  height: 29px;
  flex: none;
  display: flex;
  justify-content: space-between;
  align-items: center;
  padding: 0 25px 0 6px;
  border-top: 1px solid #d6d4d1;
}
```
